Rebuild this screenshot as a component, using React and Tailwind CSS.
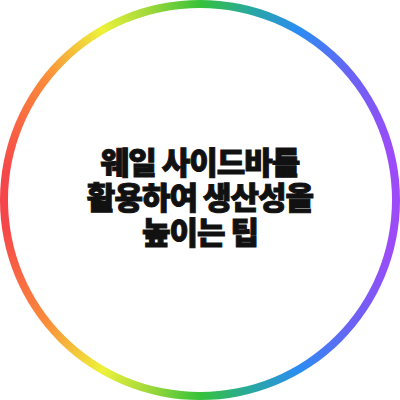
import React from 'react';

const lines = ['웨일 사이드바를', '활용하여 생산성을', '높이는 팁'];

function App() {
  return (
    <div className="flex h-[400px] w-[400px] items-center justify-center bg-white">
      <div className="h-[400px] w-[400px] rounded-full bg-[conic-gradient(#36c23a_0deg,#28a8a0_15deg,#2b8cf3_30deg,#6a63f5_50deg,#9b4bf8_75deg,#9b4bf8_105deg,#6a63f5_130deg,#2b8cf3_150deg,#28a8a0_165deg,#36c23a_180deg,#9ed83a_195deg,#eef23a_210deg,#fb8a3a_232deg,#f5464a_262deg,#f5464a_278deg,#fb8a3a_308deg,#eef23a_330deg,#9ed83a_345deg,#36c23a_360deg)] p-[8px]">
        <div className="flex h-full w-full items-center justify-center rounded-full bg-white pb-[10px]">
          <h1 className="text-center font-['Noto_Sans_CJK_KR',sans-serif] text-[31px] font-black leading-[35px] tracking-[-1px] text-[#111111] [-webkit-text-stroke:1px_#111111]">
            {lines.map((line) => (
              <div key={line}>{line}</div>
            ))}
          </h1>
        </div>
      </div>
    </div>
  );
}

export default App;
